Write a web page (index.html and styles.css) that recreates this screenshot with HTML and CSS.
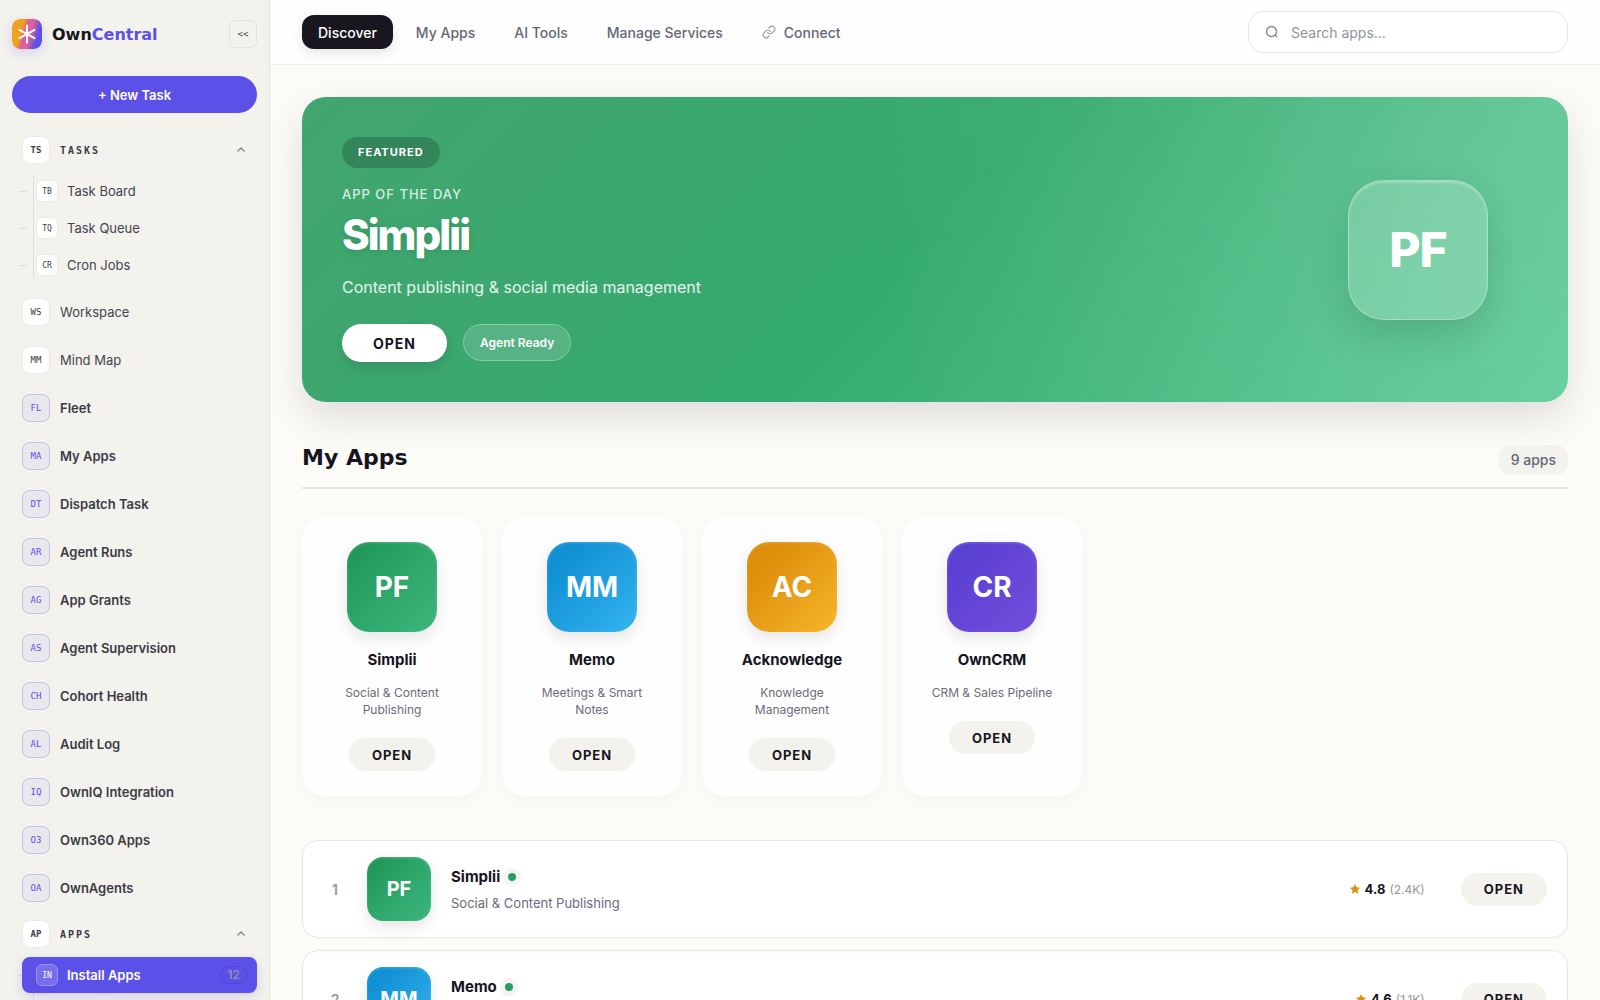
FILE: index.html
```html
<!DOCTYPE html>
<html lang="en">
<head>
    <meta charset="UTF-8">
    <meta name="viewport" content="width=device-width, initial-scale=1.0">
    <title>OwnCentral</title>
    <link rel="stylesheet" href="styles.css">
</head>
<body>
    <aside class="sidebar">
        <div class="sidebar-header">
            <svg class="logo" viewBox="0 0 30 30" aria-hidden="true">
                <defs>
                    <linearGradient id="logo-bg" x1="0" y1="0.35" x2="1" y2="0.65">
                        <stop offset="0" stop-color="#efa31c"/>
                        <stop offset="0.28" stop-color="#efa31c"/>
                        <stop offset="0.42" stop-color="#dd609c"/>
                        <stop offset="0.6" stop-color="#dd609c"/>
                        <stop offset="0.85" stop-color="#5b50e8"/>
                    </linearGradient>
                </defs>
                <rect width="30" height="30" rx="8" fill="url(#logo-bg)"/>
                <path d="M15 6.5v17M7.5 10.8l15 8.4M22.5 10.8l-15 8.4" stroke="#fff" stroke-width="2" stroke-linecap="round"/>
            </svg>
            <span class="brand">Own<span class="brand-accent">Central</span></span>
            <button class="collapse-button" aria-label="Collapse sidebar">&lt;&lt;</button>
        </div>
        <button class="new-task">+ New Task</button>

        <nav class="side-nav">
            <div class="nav-group">
                <button class="group-toggle">
                    <span class="badge badge-bold">TS</span>
                    <span class="group-name">TASKS</span>
                    <svg class="chevron" viewBox="0 0 10 10"><path d="M1.5 6.5 5 3l3.5 3.5"/></svg>
                </button>
                <div class="submenu">
                    <a href="#" class="sub-item"><span class="badge badge-small">TB</span>Task Board</a>
                    <a href="#" class="sub-item"><span class="badge badge-small">TQ</span>Task Queue</a>
                    <a href="#" class="sub-item"><span class="badge badge-small">CR</span>Cron Jobs</a>
                </div>
            </div>
            <a href="#" class="nav-item"><span class="badge">WS</span>Workspace</a>
            <a href="#" class="nav-item"><span class="badge">MM</span>Mind Map</a>
            <a href="#" class="nav-item strong"><span class="badge badge-tint">FL</span>Fleet</a>
            <a href="#" class="nav-item strong"><span class="badge badge-tint">MA</span>My Apps</a>
            <a href="#" class="nav-item strong"><span class="badge badge-tint">DT</span>Dispatch Task</a>
            <a href="#" class="nav-item strong"><span class="badge badge-tint">AR</span>Agent Runs</a>
            <a href="#" class="nav-item strong"><span class="badge badge-tint">AG</span>App Grants</a>
            <a href="#" class="nav-item strong"><span class="badge badge-tint">AS</span>Agent Supervision</a>
            <a href="#" class="nav-item strong"><span class="badge badge-tint">CH</span>Cohort Health</a>
            <a href="#" class="nav-item strong"><span class="badge badge-tint">AL</span>Audit Log</a>
            <a href="#" class="nav-item strong"><span class="badge badge-tint">IQ</span>OwnIQ Integration</a>
            <a href="#" class="nav-item strong"><span class="badge badge-tint">O3</span>Own360 Apps</a>
            <a href="#" class="nav-item strong"><span class="badge badge-tint">OA</span>OwnAgents</a>
            <div class="nav-group">
                <button class="group-toggle">
                    <span class="badge badge-bold">AP</span>
                    <span class="group-name">APPS</span>
                    <svg class="chevron" viewBox="0 0 10 10"><path d="M1.5 6.5 5 3l3.5 3.5"/></svg>
                </button>
                <div class="submenu submenu-open">
                    <a href="#" class="sub-item active"><span class="badge badge-small">IN</span>Install Apps<span class="count">12</span></a>
                </div>
            </div>
        </nav>
    </aside>

    <div class="content">
        <header class="topbar">
            <nav class="tabs">
                <button class="tab active">Discover</button>
                <button class="tab">My Apps</button>
                <button class="tab">AI Tools</button>
                <button class="tab">Manage Services</button>
                <button class="tab">
                    <svg class="link-icon" viewBox="0 0 24 24"><path d="M10 13a5 5 0 0 0 7.54.54l3-3a5 5 0 0 0-7.07-7.07l-1.72 1.71"/><path d="M14 11a5 5 0 0 0-7.54-.54l-3 3a5 5 0 0 0 7.07 7.07l1.71-1.71"/></svg>
                    Connect
                </button>
            </nav>
            <label class="search">
                <svg class="search-icon" viewBox="0 0 14 14"><circle cx="6.5" cy="6.5" r="5"/><path d="M10 10l1.8 1.8"/></svg>
                <input type="text" placeholder="Search apps..." aria-label="Search apps">
            </label>
        </header>

        <main class="page">
            <section class="hero">
                <div class="hero-text">
                    <span class="featured">FEATURED</span>
                    <p class="eyebrow">APP OF THE DAY</p>
                    <h1>Simplii</h1>
                    <p class="hero-desc">Content publishing &amp; social media management</p>
                    <div class="hero-actions">
                        <button class="hero-open">OPEN</button>
                        <span class="agent-ready">Agent Ready</span>
                    </div>
                </div>
                <div class="hero-tile">PF</div>
            </section>

            <div class="section-header">
                <h2>My Apps</h2>
                <span class="app-count">9 apps</span>
            </div>

            <section class="cards">
                <article class="card">
                    <div class="tile green">PF</div>
                    <h3>Simplii</h3>
                    <p>Social &amp; Content Publishing</p>
                    <button class="open-button">OPEN</button>
                </article>
                <article class="card">
                    <div class="tile blue">MM</div>
                    <h3>Memo</h3>
                    <p>Meetings &amp; Smart Notes</p>
                    <button class="open-button">OPEN</button>
                </article>
                <article class="card">
                    <div class="tile amber">AC</div>
                    <h3>Acknowledge</h3>
                    <p>Knowledge Management</p>
                    <button class="open-button">OPEN</button>
                </article>
                <article class="card">
                    <div class="tile violet">CR</div>
                    <h3>OwnCRM</h3>
                    <p>CRM &amp; Sales Pipeline</p>
                    <button class="open-button">OPEN</button>
                </article>
            </section>

            <section class="app-list">
                <article class="app-row">
                    <span class="rank">1</span>
                    <div class="tile tile-small green">PF</div>
                    <div class="app-info">
                        <h3>Simplii<span class="status"></span></h3>
                        <p>Social &amp; Content Publishing</p>
                    </div>
                    <div class="rating">
                        <svg class="star" viewBox="0 0 24 24"><path d="M12 2l3.1 6.6 7 .9-5.1 5 1.3 7.2L12 18.2l-6.3 3.5L7 14.5l-5.1-5 7-.9z"/></svg>
                        <b>4.8</b>
                        <span class="reviews">(2.4K)</span>
                    </div>
                    <button class="open-button">OPEN</button>
                </article>
                <article class="app-row">
                    <span class="rank">2</span>
                    <div class="tile tile-small blue">MM</div>
                    <div class="app-info">
                        <h3>Memo<span class="status"></span></h3>
                        <p>Meetings &amp; Smart Notes</p>
                    </div>
                    <div class="rating">
                        <svg class="star" viewBox="0 0 24 24"><path d="M12 2l3.1 6.6 7 .9-5.1 5 1.3 7.2L12 18.2l-6.3 3.5L7 14.5l-5.1-5 7-.9z"/></svg>
                        <b>4.6</b>
                        <span class="reviews">(1.1K)</span>
                    </div>
                    <button class="open-button">OPEN</button>
                </article>
            </section>
        </main>
    </div>
</body>
</html>
```
FILE: styles.css
```css
* {
    box-sizing: border-box;
}
body {
    font-family: Inter, "Liberation Sans", sans-serif;
    background-color: #fcfbf8;
    color: #15151f;
    margin: 0;
    display: flex;
    height: 100vh;
    overflow: hidden;
}
h1, h2, h3, p {
    margin: 0;
}
button {
    font-family: inherit;
    border: none;
    cursor: pointer;
}
a {
    color: inherit;
    text-decoration: none;
}

/* Sidebar */
.sidebar {
    width: 270px;
    flex-shrink: 0;
    height: 100vh;
    overflow-y: auto;
    scrollbar-width: none;
    padding: 19px 12px 0;
    background-color: #f3f2ed;
    border-right: 1px solid #e3e2de;
}
.sidebar-header {
    display: flex;
    align-items: center;
    gap: 10px;
    margin-bottom: 27px;
}
.logo {
    width: 30px;
    height: 30px;
    border-radius: 8px;
    box-shadow: 0 4px 12px rgba(91, 80, 232, 0.2);
}
.brand {
    flex: 1;
    font-family: "DejaVu Sans", sans-serif;
    font-size: 16px;
    font-weight: 700;
}
.brand-accent {
    color: #5b50e8;
}
.collapse-button {
    width: 28px;
    height: 28px;
    padding: 0;
    border: 1px solid #e3e2de;
    border-radius: 6px;
    background: none;
    color: #45454f;
    font-family: "DejaVu Sans Mono", monospace;
    font-size: 9px;
}
.new-task {
    width: 100%;
    height: 37px;
    margin-bottom: 17px;
    border-radius: 20px;
    background-color: #5b50e8;
    color: white;
    font-size: 13px;
    font-weight: 600;
}
.side-nav {
    display: flex;
    flex-direction: column;
    gap: 4px;
    margin-left: 10px;
    font-size: 13px;
    color: #45454f;
}
.nav-item {
    display: flex;
    align-items: center;
    gap: 10px;
    height: 44px;
}
.nav-item.strong {
    font-weight: 600;
    color: #3b3b46;
}
.nav-group {
    margin: 2px 0;
}
.group-toggle {
    display: flex;
    align-items: center;
    gap: 10px;
    width: 100%;
    height: 36px;
    padding: 0 11px 0 0;
    background: none;
    color: #3b3b46;
    text-align: left;
}
.group-name {
    flex: 1;
    font-family: "DejaVu Sans Mono", monospace;
    font-size: 10px;
    font-weight: 700;
    letter-spacing: 2px;
}
.chevron {
    width: 10px;
    height: 10px;
    fill: none;
    stroke: #8c8c96;
    stroke-width: 1.5;
}
.badge {
    display: flex;
    align-items: center;
    justify-content: center;
    width: 28px;
    height: 28px;
    border: 1px solid #ebeae6;
    border-radius: 8px;
    background-color: white;
    color: #3b3b46;
    font-family: "DejaVu Sans Mono", monospace;
    font-size: 9px;
    font-weight: 400;
}
.badge-bold {
    font-weight: 700;
}
.badge-small {
    width: 22px;
    height: 22px;
    border-radius: 6px;
    font-size: 8px;
}
.badge-tint {
    border-color: #c4c0ec;
    background-color: #e8e7eb;
    color: #5b50e8;
}
.submenu {
    position: relative;
    display: flex;
    flex-direction: column;
    gap: 1px;
    padding: 5px 0 1px;
}
.submenu::before {
    content: "";
    position: absolute;
    left: 11px;
    top: 7px;
    bottom: 5px;
    width: 1px;
    background-color: #dfdeda;
}
.submenu-open {
    padding-bottom: 20px;
}
.sub-item {
    position: relative;
    display: flex;
    align-items: center;
    gap: 9px;
    height: 36px;
    padding: 0 10px 0 14px;
}
.sub-item::before {
    content: "";
    position: absolute;
    left: -3px;
    width: 8px;
    height: 1px;
    background-color: #dfdeda;
}
.sub-item.active {
    border-radius: 8px;
    background-color: #5b50e8;
    box-shadow: 0 4px 12px rgba(91, 80, 232, 0.2);
    color: white;
    font-weight: 600;
}
.sub-item.active::before {
    background-color: rgba(60, 50, 140, 0.15);
}
.sub-item.active .badge {
    border-color: #9c95f1;
    background-color: #776df0;
    color: white;
}
.count {
    margin-left: auto;
    padding: 0 6px;
    border: 1px solid #5344d2;
    border-radius: 9px;
    color: #8c91a6;
    font-size: 12px;
    line-height: 16px;
}

/* Top bar */
.content {
    flex: 1;
    min-width: 0;
    overflow-y: auto;
    scrollbar-width: none;
}
.topbar {
    display: flex;
    align-items: center;
    justify-content: space-between;
    padding: 11px 32px;
    background-color: #fefefe;
    border-bottom: 1px solid #efeeea;
}
.tabs {
    display: flex;
    gap: 7px;
}
.tab {
    display: flex;
    align-items: center;
    gap: 8px;
    height: 34px;
    padding: 0 16px;
    border-radius: 12px;
    background: none;
    color: #656776;
    font-size: 14px;
    font-weight: 500;
}
.tab.active {
    background-color: #18171f;
    box-shadow: 0 4px 12px rgba(0, 0, 0, 0.1);
    color: white;
}
.link-icon {
    width: 14px;
    height: 14px;
    fill: none;
    stroke: #9a9ba5;
    stroke-width: 2;
    stroke-linecap: round;
}
.search {
    display: flex;
    align-items: center;
    gap: 12px;
    width: 320px;
    height: 42px;
    padding: 0 16px;
    border: 1px solid #e7e6e1;
    border-radius: 16px;
    background-color: white;
}
.search-icon {
    width: 14px;
    height: 14px;
    fill: none;
    stroke: #858893;
    stroke-width: 1.3;
    stroke-linecap: round;
}
.search input {
    flex: 1;
    min-width: 0;
    padding: 0;
    border: none;
    outline: none;
    background: none;
    font-family: inherit;
    font-size: 14px;
}
.search input::placeholder {
    color: #9293a0;
}

/* Featured app */
.page {
    padding: 32px;
}
.hero {
    display: flex;
    align-items: center;
    justify-content: space-between;
    padding: 40px 80px 40px 40px;
    border-radius: 24px;
    background:
        radial-gradient(circle at 100% 0%, rgba(255, 255, 255, 0.16) 0%, transparent 55%),
        linear-gradient(135deg, #43a56f 0%, #34aa6e 48%, #5acb95 100%);
    box-shadow: 0 16px 40px rgba(0, 0, 0, 0.12);
    color: white;
}
.hero-text {
    display: flex;
    flex-direction: column;
    align-items: flex-start;
}
.featured {
    margin-bottom: 16px;
    padding: 0 16px;
    border-radius: 16px;
    background-color: #35855a;
    font-size: 11px;
    font-weight: 700;
    line-height: 31px;
    letter-spacing: 1px;
}
.eyebrow {
    margin-bottom: 8px;
    color: #d8eee1;
    font-size: 13px;
    font-weight: 500;
    line-height: 20px;
    letter-spacing: 1px;
}
.hero h1 {
    margin-bottom: 16px;
    font-size: 42px;
    font-weight: 800;
    line-height: 46px;
    letter-spacing: -2px;
    text-shadow: 0 2px 8px rgba(0, 0, 0, 0.12);
}
.hero-desc {
    margin-bottom: 24px;
    color: #e6f5ec;
    font-size: 16px;
    line-height: 26px;
}
.hero-actions {
    display: flex;
    gap: 16px;
}
.hero-open {
    height: 38px;
    padding: 0 31px;
    border-radius: 20px;
    background-color: white;
    box-shadow: 0 6px 16px rgba(0, 0, 0, 0.12);
    color: #15151f;
    font-size: 14px;
    font-weight: 700;
    letter-spacing: 1px;
}
.agent-ready {
    height: 37px;
    padding: 0 16px;
    border: 1px solid #7fd0a4;
    border-radius: 20px;
    background-color: #57b384;
    font-size: 12px;
    font-weight: 600;
    line-height: 35px;
}
.hero-tile {
    display: flex;
    align-items: center;
    justify-content: center;
    width: 140px;
    height: 140px;
    border: 1px solid rgba(255, 255, 255, 0.3);
    border-radius: 36px;
    background-color: rgba(255, 255, 255, 0.18);
    box-shadow: 0 16px 40px rgba(0, 0, 0, 0.14), inset 0 2px 2px rgba(255, 255, 255, 0.25);
    font-size: 48px;
    font-weight: 800;
    letter-spacing: -1px;
}

/* My apps */
.section-header {
    display: flex;
    align-items: baseline;
    justify-content: space-between;
    margin: 43px 0 28px;
    padding-bottom: 12px;
    border-bottom: 2px solid #e5e4de;
}
.section-header h2 {
    font-family: "DejaVu Sans", sans-serif;
    font-size: 22px;
    font-weight: 700;
    line-height: 26px;
}
.app-count {
    padding: 0 12px;
    border-radius: 12px;
    background-color: #f3f2ed;
    color: #656776;
    font-size: 14px;
    font-weight: 500;
    line-height: 30px;
}
.cards {
    display: grid;
    grid-template-columns: repeat(auto-fill, 180px);
    gap: 20px;
    margin-bottom: 44px;
}
.card {
    display: flex;
    flex-direction: column;
    align-items: center;
    padding: 25px;
    border-radius: 24px;
    background-color: #fefefe;
    box-shadow: 0 4px 16px rgba(0, 0, 0, 0.03);
    text-align: center;
}
.card h3 {
    margin: 16px 0 12px;
    font-size: 15px;
    font-weight: 700;
    line-height: 24px;
}
.card p {
    margin-bottom: 20px;
    color: #6a6c7a;
    font-size: 12px;
    line-height: 17px;
}
.tile {
    display: flex;
    align-items: center;
    justify-content: center;
    width: 90px;
    height: 90px;
    border-radius: 22px;
    box-shadow: 0 6px 16px rgba(0, 0, 0, 0.1), inset 0 1px 3px rgba(255, 255, 255, 0.2);
    color: white;
    font-size: 28px;
    font-weight: 700;
}
.tile-small {
    width: 64px;
    height: 64px;
    border-radius: 16px;
    font-size: 20px;
}
.green {
    background-image: linear-gradient(135deg, #20965a 10%, #2ea76b 50%, #3db67c 100%);
}
.blue {
    background-image: linear-gradient(135deg, #1190d4 20%, #35b4f1 100%);
}
.amber {
    background-image: linear-gradient(135deg, #dd8e0b 20%, #f4b027 90%);
}
.violet {
    background-image: linear-gradient(135deg, #5b41d3 20%, #714cdb 90%);
}
.open-button {
    height: 33px;
    padding: 0 23px;
    border-radius: 17px;
    background-color: #f3f2ed;
    color: #15151f;
    font-size: 13px;
    font-weight: 700;
    letter-spacing: 1px;
}

/* Ranked list */
.app-list {
    display: flex;
    flex-direction: column;
    gap: 12px;
}
.app-row {
    display: flex;
    align-items: center;
    gap: 20px;
    padding: 16px 20px;
    border: 1px solid #e7e6e1;
    border-radius: 16px;
    background-color: white;
    box-shadow: 0 1px 4px rgba(0, 0, 0, 0.02);
}
.rank {
    width: 24px;
    color: #9596a0;
    font-size: 14px;
    font-weight: 600;
    text-align: center;
}
.app-info {
    flex: 1;
}
.app-info h3 {
    display: flex;
    align-items: center;
    gap: 8px;
    margin-bottom: 4px;
    font-size: 15px;
    font-weight: 700;
    line-height: 24px;
}
.app-info p {
    color: #6a6c7a;
    font-size: 13px;
    line-height: 20px;
}
.status {
    width: 8px;
    height: 8px;
    border-radius: 50%;
    background-color: #249e61;
    box-shadow: 0 0 0 5px #f5f4f0;
}
.rating {
    display: flex;
    align-items: center;
    gap: 4px;
    margin-right: 16px;
    font-size: 13px;
}
.star {
    width: 12px;
    height: 12px;
    fill: #e0910f;
}
.reviews {
    color: #9596a0;
    font-size: 12px;
}
```
